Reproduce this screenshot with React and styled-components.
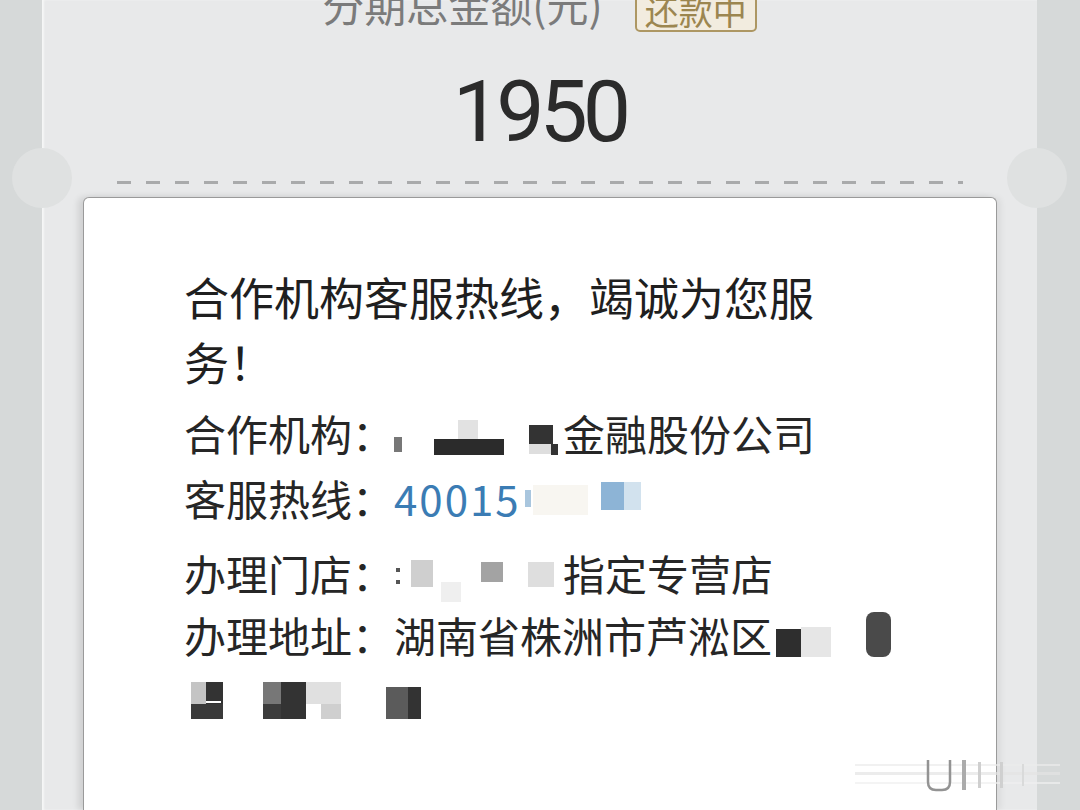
import React from 'react';
import styled, { createGlobalStyle } from 'styled-components';

const GlobalStyle = createGlobalStyle`
  html, body {
    margin: 0;
    padding: 0;
    background: #d6d9d9;
    overflow: hidden;
  }
  body {
    font-family: "Noto Sans CJK SC", "Noto Sans", sans-serif;
  }
`;

const Page = styled.div`
  position: relative;
  height: 810px;
  overflow: hidden;
  display: flex;
  padding: 0 43px 0 42px;
  box-sizing: border-box;
`;

const Card = styled.div`
  flex: 1;
  display: flex;
  flex-direction: column;
  background: #e8e9ea;
  box-shadow: inset 2px 0 2px rgba(255, 255, 255, 0.6);
`;

const Header = styled.div`
  display: flex;
  justify-content: center;
  gap: 32px;
  height: 56px;
  margin-top: -24px;
`;

const Label = styled.span`
  font-size: 42px;
  line-height: 56px;
  color: #7b7b7b;
`;

const Badge = styled.span`
  align-self: flex-end;
  height: 40px;
  box-sizing: border-box;
  padding: 0 8px;
  border: 2px solid #ad9763;
  border-radius: 5px;
  background: #f2ecdf;
  color: #9c8650;
  font-size: 34px;
  line-height: 34px;
`;

const Amount = styled.div`
  margin-top: 30px;
  text-align: center;
  font-family: Roboto, "Liberation Sans", sans-serif;
  font-size: 86px;
  line-height: 100px;
  letter-spacing: -5px;
  color: #2b2b2b;
`;

const Divider = styled.div`
  position: relative;
  margin-top: 19px;
  height: 3px;
  padding: 0 74px 0 75px;

  &::before,
  &::after {
    content: '';
    position: absolute;
    top: -33px;
    width: 60px;
    height: 60px;
    border-radius: 50%;
    background: #dfe1e1;
  }
  &::before { left: -30px; }
  &::after { right: -30px; }
`;

const Dashes = styled.div`
  height: 3px;
  background-image: linear-gradient(to right, #a9aaab 0 14px, transparent 14px);
  background-size: 29px 3px;
`;

const Modal = styled.div`
  flex: 1;
  margin: 13px 40px 0 41px;
  padding: 66px 0 0 100px;
  background: #ffffff;
  border: 1.5px solid #9a9a9a;
  border-bottom: none;
  border-radius: 6px 6px 0 0;
  box-shadow: -5px 0 6px rgba(0, 0, 0, 0.1), 4px 0 6px rgba(0, 0, 0, 0.06);
`;

const Title = styled.div`
  width: 640px;
  font-size: 45px;
  line-height: 65px;
  color: #1f1f1f;
`;

const Row = styled.div`
  display: flex;
  align-items: center;
  height: 62px;
  margin-top: ${p => p.$top || 0}px;
  font-size: 42px;
  line-height: 62px;
  color: #262626;
  white-space: nowrap;
`;

const Phone = styled.span`
  color: #3b7cb4;
  letter-spacing: 2px;
`;

const Blur = styled.svg`
  display: block;
  flex: none;
`;

const Watermark = styled.svg`
  position: absolute;
  left: 850px;
  top: 752px;
  opacity: 0.7;
`;

function Mosaic({ width, tiles }) {
  return (
    <Blur width={width} height={62} viewBox={`0 0 ${width} 62`}>
      {tiles.map(([x, y, w, h, c, r], i) => (
        <rect key={i} x={x} y={y} width={w} height={h} fill={c} rx={r || 0} />
      ))}
    </Blur>
  );
}

const orgTiles = [
  [0, 35, 8, 15, '#777'],
  [40, 37, 70, 16, '#2b2b2b'],
  [64, 18, 20, 19, '#e2e2e2'],
  [135, 23, 24, 19, '#333'],
  [135, 42, 22, 10, '#dedede'],
  [157, 42, 7, 11, '#333'],
];

const phoneTiles = [
  [4, 23, 6, 17, '#a9c6de'],
  [12, 18, 55, 30, '#f8f6f1'],
  [80, 15, 23, 28, '#8db4d6'],
  [103, 15, 17, 28, '#d2e2ee'],
];

const storeTiles = [
  [2, 26, 4, 4, '#555'],
  [2, 38, 4, 4, '#555'],
  [17, 18, 22, 27, '#cfcfcf'],
  [47, 40, 20, 20, '#efefef'],
  [87, 20, 22, 20, '#a3a3a3'],
  [134, 20, 26, 25, '#dedede'],
];

const addrTiles = [
  [4, 25, 25, 28, '#2e2e2e'],
  [29, 23, 30, 30, '#e6e6e6'],
  [94, 8, 25, 45, '#4a4a4a', 8],
];

const lineTiles = [
  [7, 16, 15, 22, '#c4c4c4'],
  [22, 16, 17, 37, '#333'],
  [7, 38, 32, 15, '#3a3a3a'],
  [22, 35, 15, 2, '#fff'],
  [79, 16, 18, 22, '#777'],
  [97, 16, 25, 37, '#333'],
  [79, 38, 18, 15, '#3c3c3c'],
  [122, 16, 35, 22, '#e0e0e0'],
  [137, 38, 20, 15, '#cfcfcf'],
  [202, 21, 22, 32, '#5b5b5b'],
  [224, 21, 13, 32, '#333'],
];

export default function App() {
  return (
    <>
      <GlobalStyle />
      <Page>
        <Card>
          <Header>
            <Label>分期总金额(元)</Label>
            <Badge>还款中</Badge>
          </Header>
          <Amount>1950</Amount>
          <Divider>
            <Dashes />
          </Divider>
          <Modal>
            <Title>合作机构客服热线，竭诚为您服务！</Title>
            <Row $top={8}>
              合作机构：
              <Mosaic width={169} tiles={orgTiles} />
              金融股份公司
            </Row>
            <Row $top={3}>
              客服热线：<Phone>40015</Phone>
              <Mosaic width={125} tiles={phoneTiles} />
            </Row>
            <Row $top={13}>
              办理门店：
              <Mosaic width={169} tiles={storeTiles} />
              指定专营店
            </Row>
            <Row>
              办理地址：湖南省株洲市芦淞区
              <Mosaic width={125} tiles={addrTiles} />
            </Row>
            <Row>
              <Mosaic width={260} tiles={lineTiles} />
            </Row>
          </Modal>
        </Card>
        <Watermark width="215" height="45" viewBox="0 0 215 45">
          <rect x="5" y="12" width="205" height="2" fill="#ececec" />
          <rect x="5" y="20" width="205" height="3" fill="#e4e4e4" />
          <rect x="5" y="30" width="205" height="2" fill="#f0f0f0" />
          <path d="M78 8 V30 Q78 38 86 38 H92 Q100 38 100 30 V8" fill="none" stroke="#666" strokeWidth="2.5" />
          <rect x="112" y="8" width="4" height="30" fill="#888" />
          <rect x="128" y="10" width="3" height="26" fill="#bbb" />
          <rect x="150" y="10" width="3" height="26" fill="#c8c8c8" />
          <rect x="172" y="12" width="2" height="22" fill="#d4d4d4" />
        </Watermark>
      </Page>
    </>
  );
}
